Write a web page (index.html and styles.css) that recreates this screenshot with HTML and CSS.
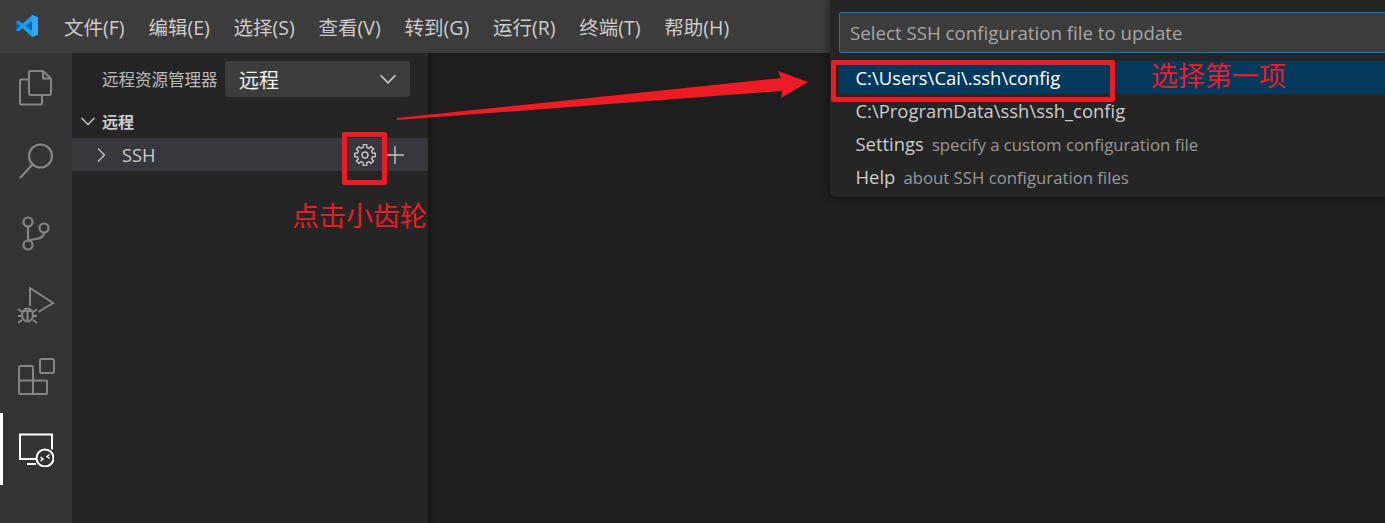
FILE: index.html
```html
<!DOCTYPE html>
<html lang="zh">
<head>
<meta charset="utf-8">
<title>Remote SSH</title>
<link rel="stylesheet" href="styles.css">
</head>
<body>
<div class="app">
  <header class="titlebar">
    <svg class="logo" viewBox="0 0 24 24" width="24" height="24"><path fill="#0065a9" d="M17.2 1 7.6 9.8 3 6.4 1 7.4v9.2l2 1 4.6-3.4 9.6 8.8 5.8-2.4V3.400z"/><path fill="#1f9cf0" d="M17.200 1 23 3.400v17.200L17.200 23 7.600 14.200 3 17.600l-2-1L5.600 12 1 7.400l2-1 4.600 3.400zM17.200 7 10.600 12l6.600 5z"/><path fill="#37a7f5" d="M17.200 1 23 3.400v17.200L17.200 23z"/></svg>
    <nav class="menu">
      <span>文件(F)</span><span>编辑(E)</span><span>选择(S)</span><span>查看(V)</span><span>转到(G)</span><span>运行(R)</span><span>终端(T)</span><span>帮助(H)</span>
    </nav>
  </header>
  <div class="main">
    <aside class="activity">
      <svg class="act" viewBox="0 0 36 36" width="36" height="36"><g fill="none" stroke="#858585" stroke-width="2" stroke-linejoin="round"><path d="M11 9.500H3.500a1.500 1.500 0 0 0-1.500 1.500v22a1.500 1.500 0 0 0 1.500 1.500h19a1.500 1.500 0 0 0 1.500-1.500v-7.500"/><path d="M12.500 1H25l8 7.500V23.500a1.500 1.500 0 0 1-1.500 1.500h-19A1.500 1.500 0 0 1 11 23.500V2.500A1.500 1.500 0 0 1 12.500 1zM25 1v7.500h8"/></g></svg>
      <svg class="act" viewBox="0 0 36 36" width="36" height="36"><g fill="none" stroke="#858585" stroke-width="2.200"><circle cx="22.500" cy="14" r="11.500"/><path d="M14.500 22.500 2 36"/></g></svg>
      <svg class="act" viewBox="0 0 36 36" width="36" height="36"><g fill="none" stroke="#858585" stroke-width="2.200"><circle cx="10" cy="8" r="4.500"/><circle cx="10" cy="31" r="4.500"/><circle cx="26" cy="14" r="4.500"/><path d="M10 12.500v14M26 18.500c0 4.500-4 6-8 6.500-4 .5-7 1-8 2"/></g></svg>
      <svg class="act" viewBox="0 0 36 36" width="36" height="36"><g fill="none" stroke="#858585" stroke-width="2"><path d="M12 20V2l23 15-14.500 9"/><ellipse cx="9.500" cy="29" rx="5.500" ry="6.500"/><path d="M5 25h9M9.500 25V35M0 23l4 3M0 37l4-3M19 23l-4 3M19 37l-4-3M0 30h4M15 30h4"/></g></svg>
      <svg class="act" viewBox="0 0 36 36" width="36" height="36"><g fill="none" stroke="#858585" stroke-width="2"><rect x="22" y="1" width="14" height="14" rx="1.500"/><path d="M1 9.500A1.500 1.500 0 0 1 2.500 8h11a1.500 1.500 0 0 1 1.500 1.500V22.500h13.500a.5.5 0 0 1 .5 .5V34.500a1.500 1.500 0 0 1-1.500 1.500H2.500A1.500 1.500 0 0 1 1 34.500zM1 22.500h14M15 22.500V36"/></g></svg>
      <div class="act-active">
        <svg viewBox="0 0 36 36" width="36" height="36"><g fill="none" stroke="#fff" stroke-width="2"><path d="M18 28H2V3.500h32v15"/><path d="M9 33h9"/><circle cx="27" cy="27" r="8.500" fill="#333"/><path d="M22.500 26l2.500 2-2.500 2M31.500 23.500l-2.500 2 2.500 2" stroke-width="1.500"/></g></svg>
      </div>
    </aside>
    <section class="sidebar">
      <div class="side-head">
        <span class="side-title">远程资源管理器</span>
        <div class="select"><span>远程</span>
          <svg class="chev" viewBox="0 0 16 16" width="20" height="20"><path d="M2 5l6 6 6-6" fill="none" stroke="#ccc" stroke-width="1.300"/></svg>
        </div>
      </div>
      <div class="section-head">
        <svg viewBox="0 0 16 16" width="16" height="16"><path d="M1.500 5l6.500 6.500L14.500 5" fill="none" stroke="#ccc" stroke-width="1.300"/></svg>
        <span>远程</span>
      </div>
      <div class="tree-row">
        <svg class="tree-chev" viewBox="0 0 16 16" width="16" height="16"><path d="M5 1.500l6.500 6.500L5 14.500" fill="none" stroke="#ccc" stroke-width="1.300"/></svg>
        <span class="tree-label">SSH</span>
        <svg class="gear" viewBox="0 0 22 22" width="22" height="22"><g fill="none" stroke="#c5c5c5" stroke-width="1.400" stroke-linejoin="round"><circle cx="11" cy="11" r="3"/><polygon points="9.180,.66 12.820,.66 12.750,3.400 15.130,4.400 17.020,2.400 19.600,4.980 17.600,6.870 18.600,9.250 21.340,9.180 21.340,12.820 18.600,12.750 17.600,15.130 19.600,17.020 17.020,19.600 15.130,17.600 12.750,18.600 12.820,21.340 9.180,21.340 9.250,18.600 6.870,17.600 4.980,19.600 2.400,17.020 4.400,15.130 3.400,12.750 .66,12.820 .66,9.180 3.400,9.250 4.400,6.870 2.400,4.980 4.980,2.400 6.870,4.400 9.250,3.400"/></g></svg>
        <svg class="plus" viewBox="0 0 18 18" width="18" height="18"><path d="M9 0v18M0 9h18" stroke="#c5c5c5" stroke-width="1.400"/></svg>
      </div>
    </section>
    <div class="editor"></div>
  </div>

  <div class="quick">
    <div class="quick-input">Select SSH configuration file to update</div>
    <ul class="quick-list">
      <li class="sel">C:\Users\Cai\.ssh\config</li>
      <li>C:\ProgramData\ssh\ssh_config</li>
      <li>Settings<small>specify a custom configuration file</small></li>
      <li>Help<small>about SSH configuration files</small></li>
    </ul>
  </div>

  <div class="mark mark-gear"></div>
  <div class="mark mark-item"></div>
  <svg class="arrow" viewBox="0 0 1385 523" width="1385" height="523"><path fill="#ed1c24" d="M397 118 781 78 778 71 808 82 781 98 782 91 397 120z"/></svg>
  <span class="note note-gear">点击小齿轮</span>
  <span class="note note-item">选择第一项</span>
</div>
</body>
</html>
```

FILE: styles.css
```css
* { box-sizing: border-box; }
html, body { margin: 0; height: 100%; overflow: hidden; background: #1e1e1e; }
body { font-family: "Open Sans", "Noto Sans CJK SC", sans-serif; color: #ccc; }
.app { position: relative; width: 1385px; height: 523px; display: flex; flex-direction: column; overflow: hidden; }

.titlebar { height: 53px; flex: none; background: #3c3c3c; display: flex; align-items: center; padding-left: 15px; }
.logo { flex: none; margin-top: -1px; }
.menu { display: flex; gap: 23.800px; margin-left: 25px; font-size: 19.500px; color: #cccccc; }

.main { flex: 1; display: flex; min-height: 0; }
.activity { width: 72px; flex: none; background: #333; display: flex; flex-direction: column; align-items: center; }
.act { margin-bottom: 36px; flex: none; overflow: visible; }
.activity .act:first-child { margin-top: 17px; }
.act-active { align-self: stretch; height: 72px; margin-top: -17px; border-left: 3px solid #fff; display: flex; align-items: center; justify-content: center; padding-right: 3px; }

.sidebar { width: 356px; flex: none; background: #252526; }
.side-head { display: flex; align-items: center; height: 44px; padding-top: 8px; padding-left: 30px; }
.side-title { font-size: 16.500px; color: #bbb; width: 123px; white-space: nowrap; }
.select { width: 185px; height: 36px; background: #3c3c3c; border-radius: 3px; display: flex; align-items: center; justify-content: space-between; padding: 0 12px 0 14px; font-size: 20px; color: #f0f0f0; }
.section-head { display: flex; align-items: center; height: 41px; padding: 6px 0 0 8px; gap: 6px; font-size: 16px; font-weight: 700; color: #ccc; }
.tree-row { height: 33px; background: #37373d; display: flex; align-items: center; padding-left: 21px; }
.tree-chev { flex: none; }
.tree-label { font-size: 18.300px; margin-left: 13px; color: #ccc; flex: 1; }
.gear { flex: none; margin-right: 10px; }
.plus { flex: none; margin-right: 24px; }
.editor { flex: 1; background: #1e1e1e; box-shadow: inset 6px 0 6px -6px #111; }

.quick { position: absolute; left: 830px; top: 0; right: -10px; height: 197px; background: #252526; border-radius: 0 0 0 6px; box-shadow: 0 0 8px rgba(0,0,0,.5); padding: 12px 0 0 9px; }
.quick-input { height: 41px; background: #3c3c3c; border: 1px solid #007fd4; border-radius: 2px; padding-left: 10px; line-height: 40px; font-size: 18.700px; color: #a6a6a6; white-space: nowrap; }
.quick-list { list-style: none; margin: 8px 0 0; padding: 0; font-size: 18.450px; }
.quick-list li { height: 33px; line-height: 33px; padding-left: 16.500px; color: #ccc; white-space: nowrap; }
.quick-list li.sel { background: #04395e; color: #fff; }
.quick-list small { font-size: 16.750px; color: #999; margin-left: 8px; }

.mark { position: absolute; border: 5px solid #ed1c24; border-radius: 2px; }
.mark-gear { left: 342px; top: 132px; width: 45px; height: 53px; }
.mark-item { left: 831px; top: 60px; width: 284px; height: 42px; }
.arrow { position: absolute; left: 0; top: 0; pointer-events: none; }
.note { position: absolute; font-family: "Noto Sans CJK SC", sans-serif; font-size: 27px; line-height: 36px; color: #ed1c24; white-space: nowrap; }
.note-gear { left: 292px; top: 197px; }
.note-item { left: 1151px; top: 57px; }
```
